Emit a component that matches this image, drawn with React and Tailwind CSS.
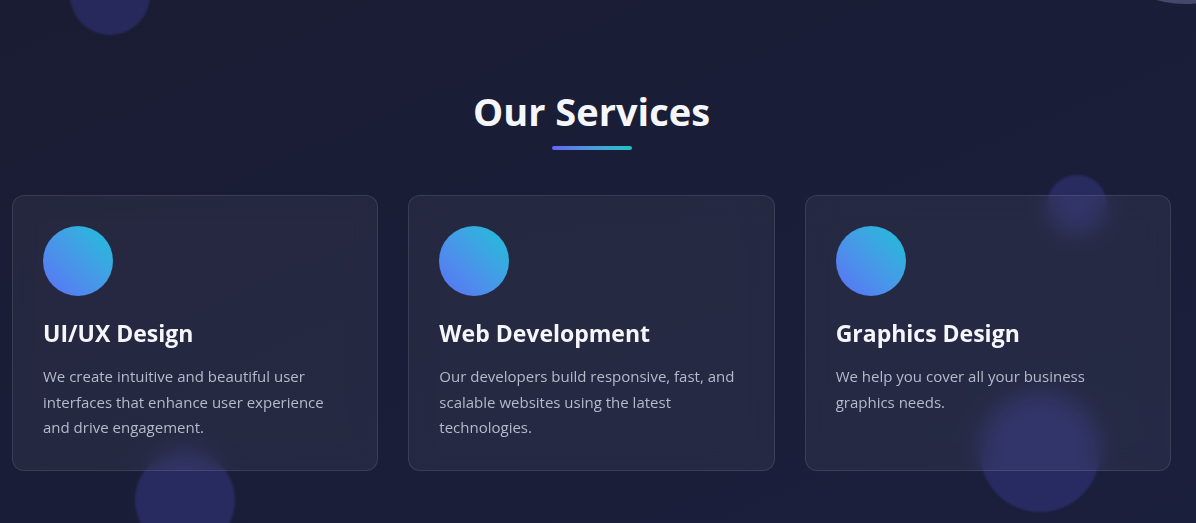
const services = [
  {
    title: 'UI/UX Design',
    text: 'We create intuitive and beautiful user interfaces that enhance user experience and drive engagement.'
  },
  {
    title: 'Web Development',
    text: 'Our developers build responsive, fast, and scalable websites using the latest technologies.'
  },
  {
    title: 'Graphics Design',
    text: 'We help you cover all your business graphics needs.'
  }
]

function ServiceCard({ title, text }) {
  return (
    <div className="relative z-10 rounded-xl border border-white/10 bg-white/[0.05] px-[30px] pt-[30px] pb-[29px] backdrop-blur-md">
      <div className="mb-[23px] h-[70px] w-[70px] rounded-full bg-gradient-to-bl from-[#0fc0d6] to-[#5a6ef6]" />
      <h3 className="mb-[16px] text-[23px] font-bold leading-[29px] text-[#f5f6fa]">{title}</h3>
      <p className="text-[15px] leading-[25.6px] text-[#b6bacb]">{text}</p>
    </div>
  )
}

export default function App() {
  return (
    <div
      className="relative h-[523px] overflow-hidden bg-gradient-to-br from-[#1a1c33] to-[#1a1f3c] pt-[87px] pl-3 pr-[25px]"
      style={{ fontFamily: '"Open Sans", "Noto Sans", sans-serif' }}
    >
      {/* floating bubbles */}
      <div className="absolute left-[70px] top-[-45px] h-[80px] w-[80px] rounded-full bg-indigo-500/20 blur-[1px]" />
      <div className="absolute left-[135px] top-[450px] h-[100px] w-[100px] rounded-full bg-indigo-500/20 blur-[1px]" />
      <div className="absolute left-[1047px] top-[175px] h-[60px] w-[60px] rounded-full bg-indigo-500/20 blur-[1px]" />
      <div className="absolute left-[980px] top-[392px] h-[120px] w-[120px] rounded-full bg-indigo-500/20 blur-[1px]" />
      <div className="absolute left-[1080px] top-[-206px] h-[210px] w-[210px] rounded-full bg-[#45486a]" />

      <h2 className="relative z-10 text-center text-[38px] font-bold leading-[48px] text-[#f5f6fa]">Our Services</h2>
      <div className="relative z-10 mx-auto mt-[11px] h-1 w-20 rounded-full bg-gradient-to-r from-[#6366f1] to-[#14c4c4]" />

      <div className="mt-[45px] grid grid-cols-3 gap-[30px]">
        {services.map(s => (
          <ServiceCard key={s.title} {...s} />
        ))}
      </div>
    </div>
  )
}
